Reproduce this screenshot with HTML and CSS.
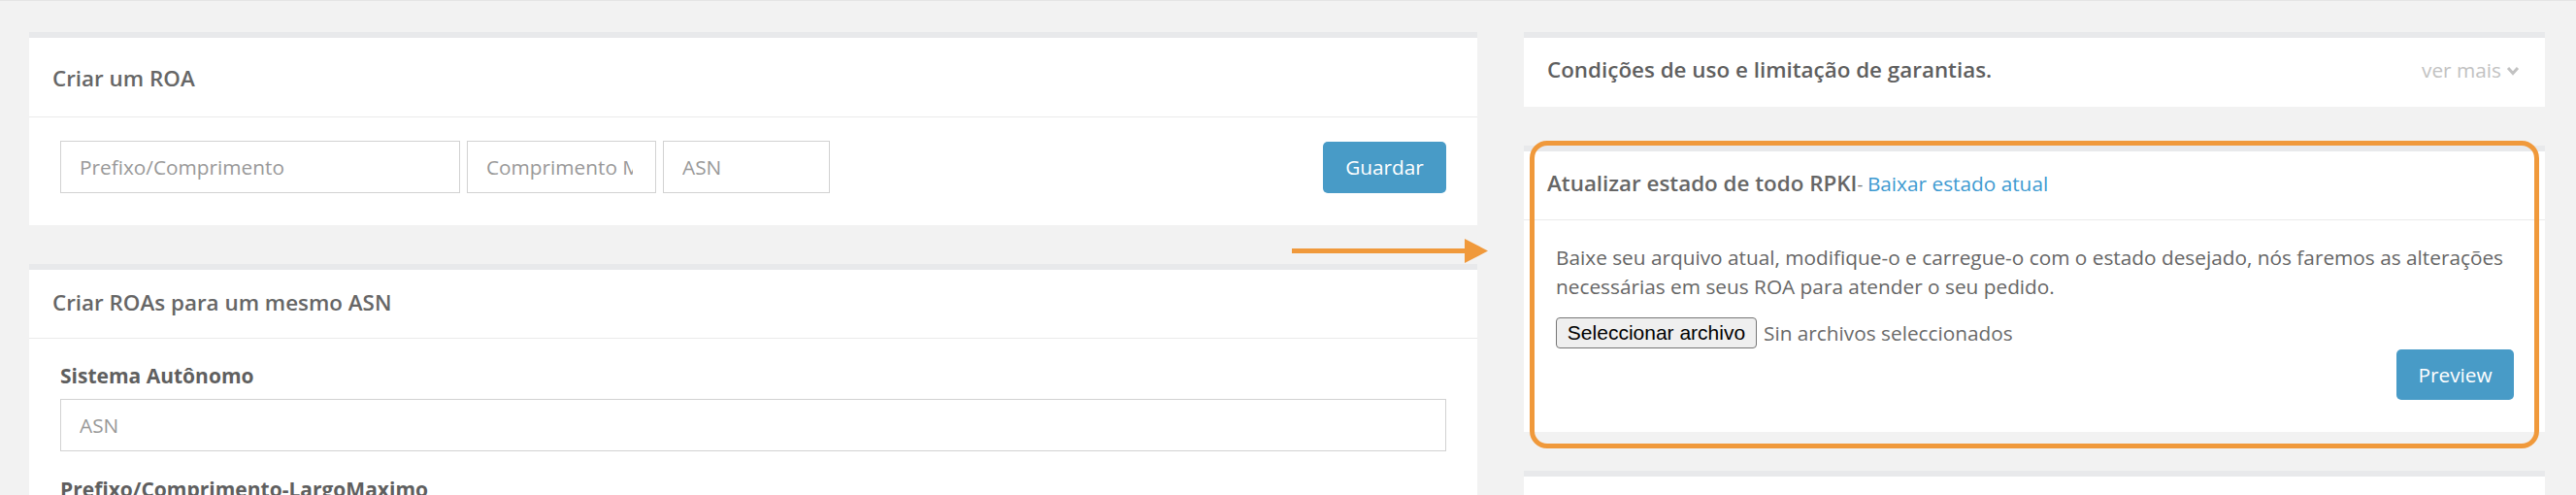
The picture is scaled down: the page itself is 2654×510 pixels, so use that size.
FILE: index.html
```html
<!DOCTYPE html>
<html lang="pt">
<head>
<meta charset="utf-8">
<title>ROA</title>
<link rel="stylesheet" href="styles.css">
</head>
<body>
<div class="page">
  <div class="col">
    <section class="panel">
      <div class="panel-heading ph-first">Criar um ROA</div>
      <div class="panel-body inline-form">
        <input class="form-control w-prefix" type="text" placeholder="Prefixo/Comprimento">
        <input class="form-control w-max" type="text" placeholder="Comprimento Máximo">
        <input class="form-control w-asn" type="text" placeholder="ASN">
        <button class="btn btn-primary btn-guardar" type="button">Guardar</button>
      </div>
    </section>
    <section class="panel">
      <div class="panel-heading ph-second">Criar ROAs para um mesmo ASN</div>
      <div class="panel-body body-form">
        <div class="form-group">
          <label class="label">Sistema Autônomo</label>
          <input class="form-control" type="text" placeholder="ASN">
        </div>
        <div class="form-group">
          <label class="label">Prefixo/Comprimento-LargoMaximo</label>
          <input class="form-control" type="text" placeholder="Prefixo/Comprimento-LargoMaximo">
        </div>
      </div>
    </section>
  </div>

  <div class="col">
    <section class="panel">
      <div class="panel-heading ph-collapsed">
        <span class="title">Condições de uso e limitação de garantias.</span>
        <span class="more">ver mais
          <svg class="chev" viewBox="0 0 14 10" width="14" height="10"><polyline points="2,2 7,7.5 12,2" fill="none" stroke="currentColor" stroke-width="3"/></svg>
        </span>
      </div>
    </section>

    <section class="panel panel-rpki">
      <div class="panel-heading ph-rpki">
        <span class="title">Atualizar estado de todo RPKI</span><span class="dash">- </span><a class="link" href="#">Baixar estado atual</a>
      </div>
      <div class="panel-body rpki-body">
        <p class="desc">Baixe seu arquivo atual, modifique-o e carregue-o com o estado desejado, nós faremos as alterações necessárias em seus ROA para atender o seu pedido.</p>
        <div class="file-row">
          <button class="file-btn" type="button">Seleccionar archivo</button>
          <span class="file-status">Sin archivos seleccionados</span>
        </div>
        <div class="actions">
          <button class="btn btn-primary btn-preview" type="button">Preview</button>
        </div>
      </div>
      <div class="highlight"></div>
    </section>

    <section class="panel panel-tail"></section>
  </div>

  <svg class="arrow" viewBox="0 0 202 25" width="202" height="25">
    <rect x="0" y="10" width="180" height="5" fill="#f0993b"/>
    <polygon points="178,0 202,12.5 178,25" fill="#f0993b"/>
  </svg>
</div>
</body>
</html>
```

FILE: styles.css
```css
html, body {
  margin: 0;
  padding: 0;
}
body {
  background: #f2f2f2;
  border-top: 1px solid #e4e4e4;
  font-family: "Open Sans", "Liberation Sans", sans-serif;
  font-size: 20.8px;
  color: #666;
  overflow: hidden;
  height: 509px;
}
.page {
  position: relative;
  display: grid;
  grid-template-columns: 1492px 1052px;
  column-gap: 48px;
  padding: 32px 32px 0 30px;
  align-items: start;
}
.col {
  display: flex;
  flex-direction: column;
  gap: 40px;
}
.panel {
  position: relative;
  background: #fff;
  border-top: 6px solid #e8e9eb;
}
.panel-heading {
  font-size: 22.4px;
  font-weight: 600;
  line-height: 32px;
  color: #666;
  padding-left: 24px;
  padding-right: 24px;
  border-bottom: 1px solid #eaeaea;
}
.ph-first { padding-top: 26px; padding-bottom: 23px; }
.ph-second { padding-top: 18px; padding-bottom: 20px; }
.ph-rpki { padding-top: 17px; padding-bottom: 20px; }
.ph-collapsed {
  padding-top: 17px;
  padding-bottom: 22px;
  border-bottom: none;
  display: flex;
  justify-content: space-between;
  align-items: center;
  color: #5f5f5f;
}
.more {
  font-size: 20.8px;
  font-weight: 400;
  color: #c2c2c2;
  display: flex;
  align-items: center;
  gap: 5px;
  margin-right: 2px;
}
.chev { display: block; margin-top: 2px; }

.dash {
  font-weight: 400;
  font-size: 18px;
  color: #777;
}
.link {
  font-weight: 400;
  font-size: 20.8px;
  color: #3d9ad1;
  text-decoration: none;
}

.panel-body {
  padding: 24px 32px 33px;
}
.inline-form {
  display: flex;
  align-items: center;
  gap: 7px;
}
.form-control {
  box-sizing: border-box;
  height: 54px;
  border: 1px solid #d2d2d2;
  border-radius: 0;
  padding: 0 19px;
  font-family: "Open Sans", "Liberation Sans", sans-serif;
  font-size: 20.8px;
  color: #555;
  background: #fff;
  outline: none;
  width: 100%;
  display: block;
}
.form-control::placeholder {
  color: #999;
  opacity: 1;
}
.inline-form .form-control { flex: none; }
.w-prefix { width: 412px; }
.w-max { width: 195px; padding-right: 23px; }
.w-asn { width: 172px; }

.btn {
  font-family: "Open Sans", "Liberation Sans", sans-serif;
  font-size: 20.8px;
  border: none;
  border-radius: 5px;
  color: #fff;
  cursor: pointer;
}
.btn-primary { background: #489bc7; }
.btn-guardar {
  margin-left: auto;
  width: 127px;
  height: 53px;
}
.btn-preview {
  width: 121px;
  height: 52px;
}

.body-form { padding-top: 23px; }
.label {
  display: block;
  font-weight: 700;
  font-size: 21px;
  line-height: 30px;
  color: #5f5f5f;
  margin-bottom: 9px;
}
.form-group { margin-bottom: 24px; }

.rpki-body { padding: 23px 32px 33px 33px; }
.desc {
  margin: 0 0 17px;
  line-height: 30px;
  color: #666;
}
.file-row {
  display: flex;
  align-items: center;
  gap: 7px;
}
.file-btn {
  box-sizing: border-box;
  height: 32px;
  width: 207px;
  padding: 0;
  font-family: "Liberation Sans", Arial, sans-serif;
  font-size: 21px;
  color: #000;
  background: #efefef;
  border: 1px solid #767676;
  border-radius: 4px;
}
.file-status {
  color: #6a6a6a;
  line-height: 30px;
}
.actions {
  display: flex;
  justify-content: flex-end;
  margin-top: 1px;
}

.highlight {
  position: absolute;
  left: 6px;
  right: 6px;
  top: -11px;
  bottom: -17px;
  border: 5px solid #f0993b;
  border-radius: 18px;
  pointer-events: none;
}
.panel-tail { height: 60px; }

.arrow {
  position: absolute;
  left: 1331px;
  top: 245px;
}
```
